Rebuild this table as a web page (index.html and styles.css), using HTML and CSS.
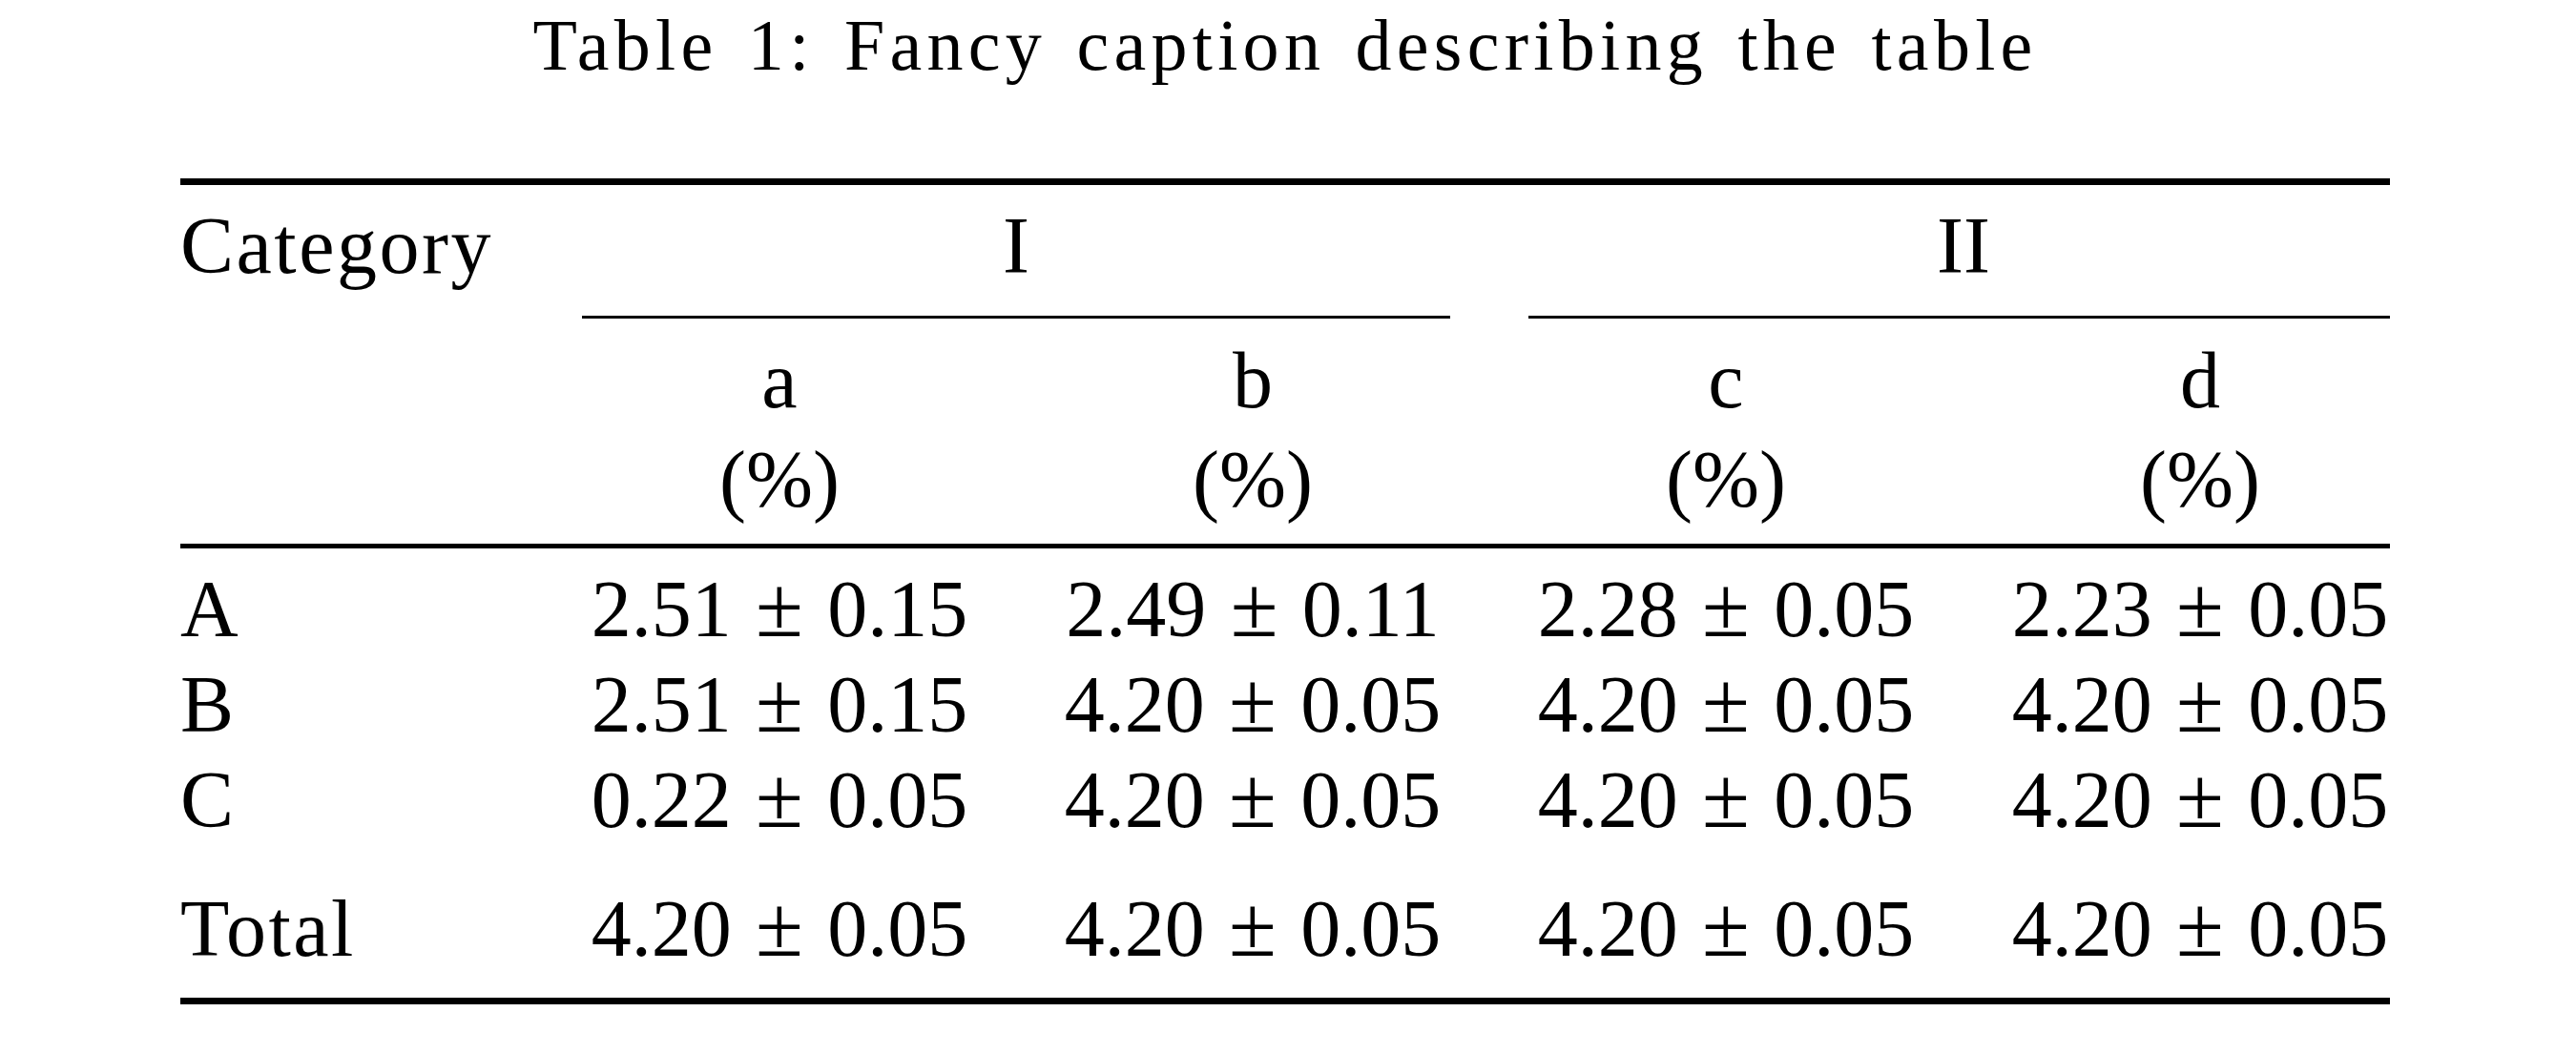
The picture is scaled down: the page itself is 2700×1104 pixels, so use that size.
FILE: index.html
```html
<!DOCTYPE html>
<html lang="en">
<head>
    <meta charset="UTF-8">
    <meta name="viewport" content="width=device-width, initial-scale=1.0">
    <title>Table 1</title>
    <link rel="stylesheet" href="styles.css">
</head>
<body>

<table class="results">
    <caption>Table 1: Fancy caption describing the table</caption>
    <colgroup>
        <col class="col-cat">
        <col class="col-num">
        <col class="col-num">
        <col class="col-num">
        <col class="col-last">
    </colgroup>
    <thead>
        <tr class="group-row">
            <th class="label">Category</th>
            <th colspan="2" class="group">I</th>
            <th colspan="2" class="group last">II</th>
        </tr>
        <tr class="unit-row">
            <th></th>
            <th>a<br>(%)</th>
            <th>b<br>(%)</th>
            <th>c<br>(%)</th>
            <th class="last">d<br>(%)</th>
        </tr>
    </thead>
    <tbody>
        <tr>
            <td class="label">A</td>
            <td>2.51<span class="pm">±</span>0.15</td>
            <td>2.49<span class="pm">±</span>0.11</td>
            <td>2.28<span class="pm">±</span>0.05</td>
            <td class="last">2.23<span class="pm">±</span>0.05</td>
        </tr>
        <tr>
            <td class="label">B</td>
            <td>2.51<span class="pm">±</span>0.15</td>
            <td>4.20<span class="pm">±</span>0.05</td>
            <td>4.20<span class="pm">±</span>0.05</td>
            <td class="last">4.20<span class="pm">±</span>0.05</td>
        </tr>
        <tr>
            <td class="label">C</td>
            <td>0.22<span class="pm">±</span>0.05</td>
            <td>4.20<span class="pm">±</span>0.05</td>
            <td>4.20<span class="pm">±</span>0.05</td>
            <td class="last">4.20<span class="pm">±</span>0.05</td>
        </tr>
        <tr class="total-row">
            <td class="label">Total</td>
            <td>4.20<span class="pm">±</span>0.05</td>
            <td>4.20<span class="pm">±</span>0.05</td>
            <td>4.20<span class="pm">±</span>0.05</td>
            <td class="last">4.20<span class="pm">±</span>0.05</td>
        </tr>
    </tbody>
</table>

</body>
</html>
```

FILE: styles.css
```css
body {
    margin: 0;
    background-color: #fff;
    color: #000;
}

.results {
    width: 2316px;
    margin-left: 189px;
    table-layout: fixed;
    border-collapse: separate;
    border-spacing: 0;
    font-family: "Liberation Serif", "Times New Roman", serif;
    font-size: 84px;
    line-height: 100px;
}

.results caption {
    padding: 2px 0 95px;
    font-size: 76px;
    line-height: 90px;
    letter-spacing: 5.3px;
    word-spacing: 7px;
    text-align: center;
}

.col-cat {
    width: 380px;
}

.col-num {
    width: 496px;
}

/* last column has no padding on the right, like @{} in latex */
.col-last {
    width: 448px;
}

.results th, .results td {
    padding: 0;
    font-weight: normal;
    text-align: center;
    vertical-align: top;
}

.results .label {
    text-align: left;
    letter-spacing: 2.5px;
}

.results .last {
    padding-left: 50px;
}

/* toprule */
.group-row th {
    border-top: 7px solid #000;
    padding-top: 14px;
}

/* cmidrule, trimmed 41px from the column edges */
.group::after {
    content: "";
    display: block;
    height: 3px;
    margin: 23px 41px 0;
    background-color: #000;
}

.group.last::after {
    margin: 23px 0 0 -9px;
}

/* midrule */
.unit-row th {
    padding-top: 13px;
    padding-bottom: 15px;
    line-height: 104px;
    border-bottom: 5px solid #000;
}

.results tbody tr:first-child td {
    padding-top: 14px;
}

/* bottomrule, with some extra space above the total */
.total-row td {
    padding-top: 35px;
    padding-bottom: 22px;
    border-bottom: 7px solid #000;
}

.pm {
    margin: 0 0.28em;
    font-size: 1.08em;
    line-height: 0;
}
```
